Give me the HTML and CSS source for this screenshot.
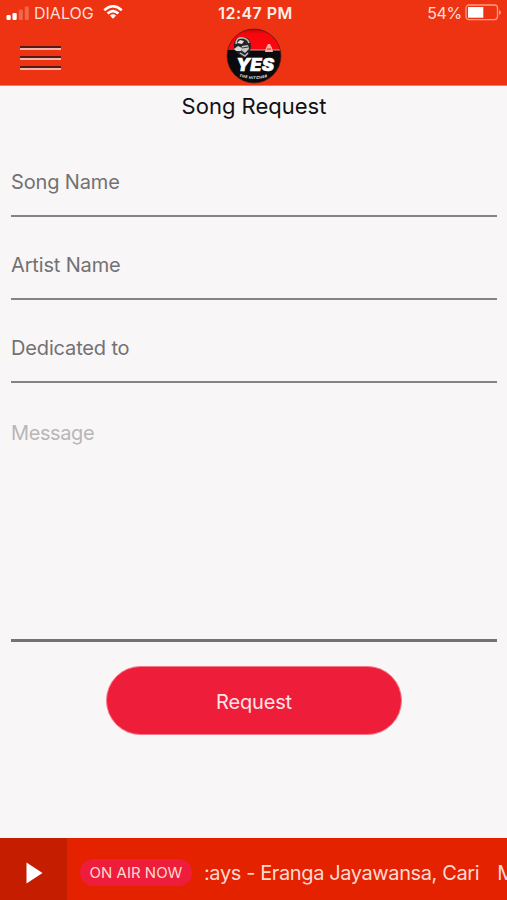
FILE: index.html
```html
<!DOCTYPE html>
<html lang="en">
<head>
    <meta charset="UTF-8">
    <meta name="viewport" content="width=device-width, initial-scale=1.0">
    <title>Song Request</title>
    <link rel="stylesheet" href="styles.css">
</head>
<body>
    <div id="app">
        <header>
            <div class="status">
                <div class="carrier">
                    <svg class="signal" width="24" height="14" viewBox="0 0 24 14" fill="#fff">
                        <rect x="0.5" y="9" width="4.2" height="5" rx="1.2"/>
                        <rect x="6.5" y="7" width="4.2" height="7" rx="1.2"/>
                        <rect x="12.8" y="3.5" width="4" height="10.5" rx="1.2" opacity=".25"/>
                        <rect x="18.8" y="0.5" width="4" height="13.5" rx="1.2" opacity=".25"/>
                    </svg>
                    <span class="network">DIALOG</span>
                    <svg class="wifi" width="20" height="14" viewBox="0 0 20 14" fill="none" stroke="#fff" stroke-width="2.5">
                        <path d="M1.2 5.2Q10 -2.6 18.8 5.2"/>
                        <path d="M4.6 8.5Q10 3.8 15.4 8.5"/>
                        <path d="M6.9 10.6Q10 7.8 13.1 10.6L10 13.8Z" fill="#fff" stroke="none"/>
                    </svg>
                </div>
                <span class="clock">12:47 PM</span>
                <div class="power">
                    <span class="percent">54%</span>
                    <svg width="37" height="17" viewBox="0 0 37 17">
                        <rect x="1" y="1" width="31.5" height="14.6" rx="3" fill="none" stroke="#ff9a85" stroke-width="1.3"/>
                        <rect x="3" y="3" width="15.3" height="10.7" fill="#fff"/>
                        <path d="M34.2 6v5q1.6-.7 1.6-2.5T34.2 6z" fill="#ffb0a0"/>
                    </svg>
                </div>
            </div>
            <div class="navbar">
                <button class="menu" aria-label="Menu"><i></i><i></i><i></i></button>
                <svg class="logo" width="56" height="56" viewBox="0 0 56 56">
                    <defs>
                        <clipPath id="disc"><circle cx="28" cy="28" r="27"/></clipPath>
                        <linearGradient id="shine" x1="0" y1="0" x2="0" y2="1">
                            <stop offset="0" stop-color="#a80808"/>
                            <stop offset=".25" stop-color="#f8060c"/>
                            <stop offset="1" stop-color="#fb0710"/>
                        </linearGradient>
                    </defs>
                    <g clip-path="url(#disc)">
                        <rect width="56" height="56" fill="#0b0b0d"/>
                        <rect width="56" height="22" fill="url(#shine)"/>
                        <path d="M22 22h34" stroke="#df9a96" stroke-width="1"/>
                        <!-- rider -->
                        <path d="M8 20Q7 9 16 9T25 19L23 26 18 30 12 26Z" fill="#252525"/>
                        <path d="M10 16Q10 9 17 10Q22 11 23 15" fill="none" stroke="#b9b9b9" stroke-width="1.6"/>
                        <path d="M11 15l3-3 4 1-2 3z" fill="#e4e4e4"/>
                        <path d="M8 21l4-3 4 2-1 3-5 0z" fill="#d8d8d8"/>
                        <path d="M16 18l6-1 1 4-4 4-4-3z" fill="#c9c9c9"/>
                        <path d="M16 20l6-1M13 24l4 1" stroke="#333" stroke-width="1"/>
                        <path d="M14 25l5 3 3-3" fill="none" stroke="#bbb" stroke-width="1.4"/>
                        <path d="M39 24l1-4 2-4 2 0 2 4 1 4z" fill="#ffb1a8"/>
                        <path d="M41 21h4" stroke="#d41c1c" stroke-width="1"/>
                    </g>
                    <circle cx="28" cy="28" r="27" fill="none" stroke="#631a14" stroke-width="1" opacity=".65"/>
                    <text class="logo-name" x="10" y="43" textLength="38" lengthAdjust="spacingAndGlyphs">YES</text>
                    <path id="curve" d="M13 48.5Q28 53.5 43 48.5" fill="none"/>
                    <text class="logo-sub"><textPath href="#curve" textLength="29">THE HITCHER</textPath></text>
                </svg>
            </div>
        </header>
        <main>
            <h1>Song Request</h1>
            <form>
                <input type="text" placeholder="Song Name">
                <input type="text" placeholder="Artist Name">
                <input type="text" placeholder="Dedicated to">
                <textarea placeholder="Message"></textarea>
                <button type="button" class="request">Request</button>
            </form>
        </main>
        <footer>
            <button class="play" aria-label="Play">
                <svg width="17" height="22" viewBox="0 0 17 22"><path d="M.5.5 16.5 11 .5 21.5z" fill="#fff"/></svg>
            </button>
            <span class="on-air">ON AIR NOW</span>
            <div class="ticker">
                <div class="track"><span>:ays - Eranga Jayawansa, Cari</span><span>M</span></div>
            </div>
        </footer>
    </div>
</body>
</html>
```

FILE: styles.css
```css
* {
    box-sizing: border-box;
}
body, html {
    margin: 0;
    padding: 0;
    height: 100%;
    overflow: hidden;
    font-family: Inter, "Liberation Sans", sans-serif;
}
button {
    border: none;
    padding: 0;
    font-family: inherit;
    cursor: pointer;
}
svg {
    display: block;
}
#app {
    display: flex;
    flex-direction: column;
    height: 100vh;
    background: #f8f6f7;
}
header {
    height: 86px;
    background: #ee3313;
    border-bottom: 1px solid #f07b67;
    color: #fff;
}
.status {
    display: grid;
    grid-template-columns: 1fr auto 1fr;
    align-items: center;
    height: 25px;
    padding: 0 5px 0 6px;
    font-size: 16px;
}
.carrier, .power {
    display: flex;
    align-items: center;
}
.network {
    margin: 0 9px 0 4px;
    color: #ffded6;
}
.wifi {
    margin-top: -2px;
}
.clock {
    font-weight: 600;
    color: #fff0ec;
    letter-spacing: 0.45px;
    margin-left: 3px;
}
.power {
    justify-content: flex-end;
    gap: 3px;
    color: #ffded6;
}
.percent {
    letter-spacing: -0.3px;
}
.navbar {
    display: grid;
    grid-template-columns: 1fr auto 1fr;
    align-items: center;
    height: 60px;
    padding: 2px 0 0 20px;
}
.menu {
    display: flex;
    flex-direction: column;
    gap: 6px;
    width: 41px;
    margin-top: 3px;
    background: none;
}
.menu i {
    height: 4px;
    border-top: 2px solid #571b14;
    border-bottom: 2px solid #f3b5ac;
}
.logo {
    margin-left: -20px;
}
.logo-name {
    font: italic 900 17px Inter, sans-serif;
    fill: #fff;
    stroke: #fff;
    stroke-width: 0.5px;
}
.logo-sub {
    font: italic 800 3.8px Inter, sans-serif;
    fill: #ddd;
}
main {
    flex: 1;
    padding: 0 10px 0 11px;
}
h1 {
    margin: 0;
    padding-top: 6px;
    font-size: 22px;
    font-weight: 400;
    line-height: 28px;
    text-align: center;
    color: #111;
}
form {
    display: flex;
    flex-direction: column;
    padding-top: 14px;
}
input, textarea {
    width: 100%;
    border: none;
    border-radius: 0;
    outline: none;
    background: none;
    font-family: inherit;
    font-size: 20px;
    letter-spacing: -0.15px;
    resize: none;
}
input {
    height: 83px;
    padding: 15px 0 0;
    border-bottom: 2px solid #858384;
}
textarea {
    height: 259px;
    padding: 38px 0 0;
    border-bottom: 3px solid #747273;
    letter-spacing: -0.4px;
}
input::placeholder {
    color: #737172;
}
textarea::placeholder {
    color: #b8b6b7;
}
.request {
    align-self: center;
    width: 296px;
    height: 69px;
    margin-top: 24px;
    padding-top: 2px;
    border: 1px solid #f4798a;
    border-radius: 35px;
    background: #ee1e3b;
    color: #ffe3e6;
    font-size: 20px;
    letter-spacing: -0.15px;
}
footer {
    display: flex;
    align-items: center;
    height: 62px;
    background: #e52200;
    color: #ffd9d0;
}
.play {
    display: flex;
    align-items: center;
    align-self: stretch;
    width: 67px;
    padding: 7px 0 0 26px;
    background: #c41d00;
}
.on-air {
    width: 112px;
    height: 27px;
    margin: 7px 13px 0 13px;
    border-radius: 14px;
    background: #ee1d3c;
    font-size: 15px;
    line-height: 27px;
    text-align: center;
}
.ticker {
    flex: 1;
    min-width: 0;
    overflow: hidden;
    padding-top: 8px;
    font-size: 20px;
    line-height: 28px;
    letter-spacing: -0.39px;
    white-space: nowrap;
}
.track {
    display: flex;
    gap: 18px;
}
/* text running in from the left edge of the ticker */
.track span:first-child {
    margin-left: -1px;
}
```
